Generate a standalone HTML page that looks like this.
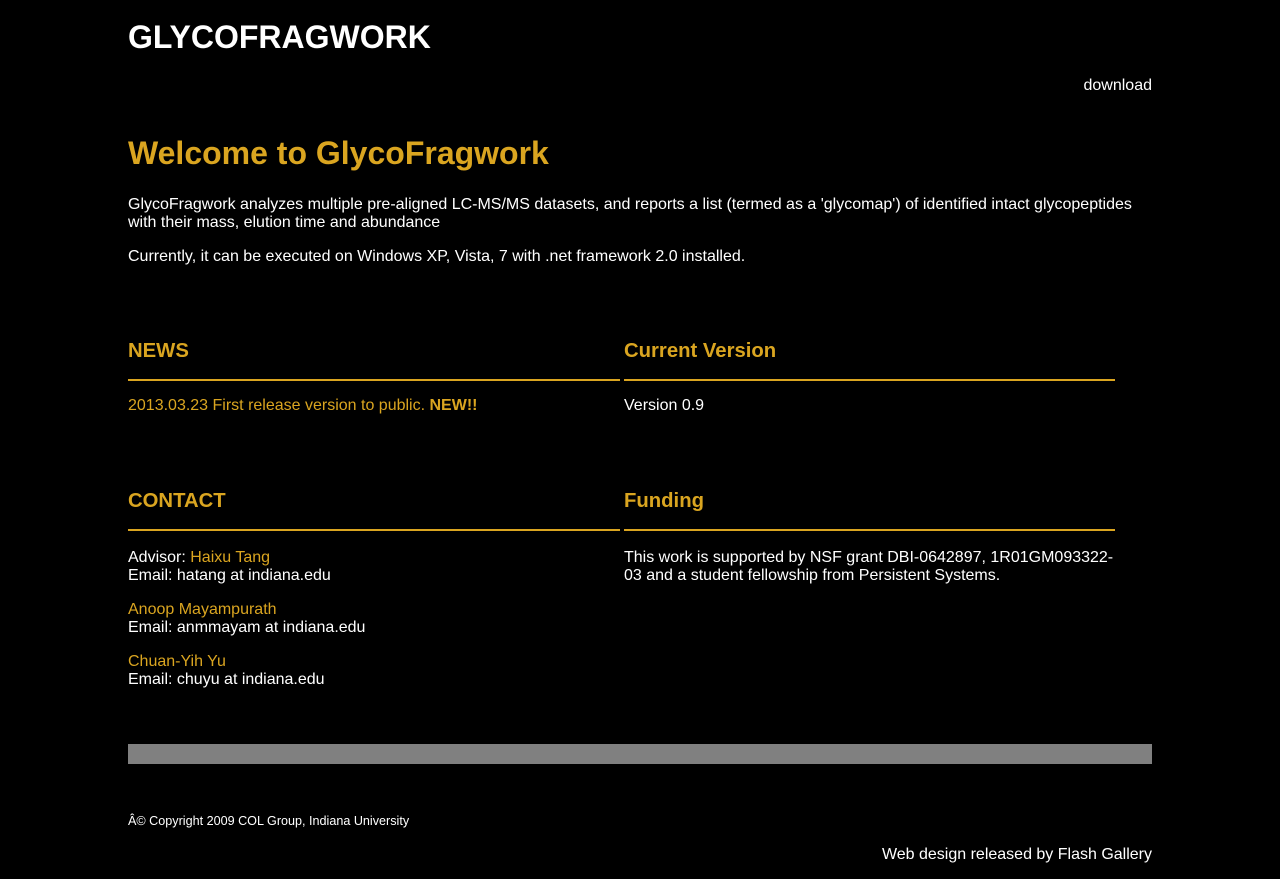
<!DOCTYPE html>
<html><head><meta charset="utf-8"><style>
body{margin:0;background:#000;color:#fff;font-family:"Liberation Sans",Arial,sans-serif;font-size:16px;width:1280px;height:879px;position:relative;overflow:hidden}
.a{position:absolute;white-space:nowrap;line-height:18px}
.g{color:#DAA520}
.line{position:absolute;height:2px;background:#DAA520;top:379px}
</style></head><body>
<div class="a" style="left:128px;top:19px;font-size:32px;line-height:36px;font-weight:bold">GLYCOFRAGWORK</div>
<div class="a" style="right:128px;top:77px">download</div>
<div class="a g" style="left:128px;top:135px;font-size:32px;line-height:36px;font-weight:bold">Welcome to GlycoFragwork</div>
<div class="a" style="left:128px;top:196px;white-space:normal;width:1024px">GlycoFragwork analyzes multiple pre-aligned LC-MS/MS datasets, and reports a list (termed as a 'glycomap') of identified intact glycopeptides with their mass, elution time and abundance</div>
<div class="a" style="left:128px;top:248px">Currently, it can be executed on Windows XP, Vista, 7 with .net framework 2.0 installed.</div>

<div class="a g" style="left:128px;top:340px;font-size:20.3px;line-height:22px;font-weight:bold">NEWS</div>
<div class="a g" style="left:624px;top:340px;font-size:20.3px;line-height:22px;font-weight:bold">Current Version</div>
<div class="line" style="left:128px;width:492px"></div>
<div class="line" style="left:624px;width:491px"></div>
<div class="a g" style="left:128px;top:397px">2013.03.23 First release version to public. <b>NEW!!</b></div>
<div class="a" style="left:624px;top:397px">Version 0.9</div>

<div class="a g" style="left:128px;top:490px;font-size:20.3px;line-height:22px;font-weight:bold">CONTACT</div>
<div class="a g" style="left:624px;top:490px;font-size:20.3px;line-height:22px;font-weight:bold">Funding</div>
<div class="line" style="left:128px;width:492px;top:529px"></div>
<div class="line" style="left:624px;width:491px;top:529px"></div>
<div class="a" style="left:128px;top:549px">Advisor: <span class="g">Haixu Tang</span><br>Email: hatang at indiana.edu</div>
<div class="a" style="left:128px;top:601px"><span class="g">Anoop Mayampurath</span><br>Email: anmmayam at indiana.edu</div>
<div class="a" style="left:128px;top:653px"><span class="g">Chuan-Yih Yu</span><br>Email: chuyu at indiana.edu</div>
<div class="a" style="left:624px;top:549px;white-space:normal;width:491px">This work is supported by NSF grant DBI-0642897, 1R01GM093322-03 and a student fellowship from Persistent Systems.</div>

<div style="position:absolute;left:128px;top:744px;width:1024px;height:20px;background:#808080"></div>
<div class="a" style="left:128px;top:814px;font-size:12.6px;line-height:15px">Â© Copyright 2009 COL Group, Indiana University</div>
<div class="a" style="right:128px;top:846px">Web design released by Flash Gallery</div>
</body></html>
